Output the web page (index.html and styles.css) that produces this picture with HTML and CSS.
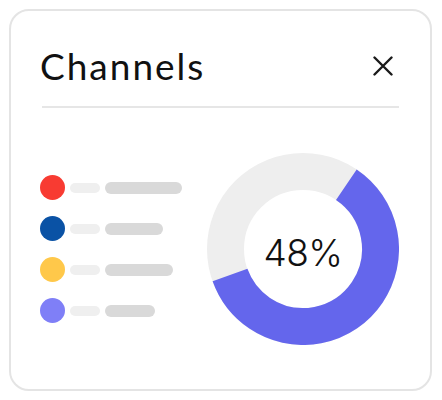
FILE: index.html
```html
<!DOCTYPE html>
<html>
<head>
<meta charset="utf-8">
<link rel="stylesheet" href="styles.css">
</head>
<body>
<div class="card">
  <div class="header">
    <h1 class="title">Channels</h1>
    <button class="close" aria-label="Close">
      <svg width="20" height="20" viewBox="0 0 20 20"><path d="M1.5 1.5 L18.5 18.5 M18.5 1.5 L1.5 18.5" stroke="#1a1a1a" stroke-width="2.4" stroke-linecap="round" fill="none"/></svg>
    </button>
  </div>
  <div class="divider"></div>
  <div class="body">
    <ul class="legend">
      <li class="row"><span class="dot red"></span><span class="bar light"></span><span class="bar dark" style="width:77px"></span></li>
      <li class="row"><span class="dot blue"></span><span class="bar light"></span><span class="bar dark" style="width:58px"></span></li>
      <li class="row"><span class="dot yellow"></span><span class="bar light"></span><span class="bar dark" style="width:68px"></span></li>
      <li class="row"><span class="dot purple"></span><span class="bar light"></span><span class="bar dark" style="width:50px"></span></li>
    </ul>
    <div class="donut">
      <svg width="192" height="192" viewBox="0 0 192 192">
        <circle cx="96" cy="96" r="77.5" fill="none" stroke="#eeeeee" stroke-width="37"/>
        <circle cx="96" cy="96" r="77.5" fill="none" stroke="#6466ec" stroke-width="37" stroke-dasharray="292.2 600" transform="rotate(-56 96 96)"/>
      </svg>
      <span class="value">48%</span>
    </div>
  </div>
</div>
</body>
</html>
```
FILE: styles.css
```css
* { box-sizing: border-box; }
html, body { margin: 0; padding: 0; background: #ffffff; }
body { padding: 9px 10px 9px 9px; }
.card {
  width: 423px;
  height: 382px;
  border: 2px solid #e4e4e4;
  border-radius: 20px;
  background: #fff;
  padding: 0 31px 0 29px;
}
.header {
  display: flex;
  align-items: center;
  justify-content: space-between;
  height: 95px;
  padding-top: 14px;
}
.title {
  margin: 0;
  font-family: "Lato", "DejaVu Sans", sans-serif;
  font-weight: 400;
  font-size: 37px;
  letter-spacing: 2px;
  color: #111;
  line-height: 44px;
}
.close {
  border: 0;
  background: none;
  padding: 0;
  margin-right: 6px;
  width: 20px;
  height: 20px;
  display: flex;
}
.divider {
  height: 2px;
  margin-left: 2px;
  background: #e6e6e6;
}
.body {
  display: flex;
  align-items: center;
  justify-content: space-between;
  margin-top: 45px;
}
.legend {
  list-style: none;
  margin: 0;
  padding: 0;
  display: flex;
  flex-direction: column;
  gap: 16px;
}
.row {
  display: flex;
  align-items: center;
  gap: 5px;
  height: 25px;
}
.dot {
  width: 25px;
  height: 25px;
  border-radius: 50%;
}
.red { background: #f83b32; }
.blue { background: #0a52a5; }
.yellow { background: #ffc84a; }
.purple { background: #7f7ff7; }
.bar { border-radius: 6px; }
.light { width: 30px; height: 10px; background: #efefef; }
.dark { height: 12px; background: #d9d9d9; }
.donut {
  position: relative;
  width: 192px;
  height: 192px;
}
.donut svg { display: block; }
.value {
  position: absolute;
  inset: 0;
  display: flex;
  align-items: center;
  justify-content: center;
  padding-top: 6px;
  font-family: "Inter", "Liberation Sans", sans-serif;
  font-size: 37px;
  font-weight: 300;
  color: #111;
  letter-spacing: -0.5px;
}
```
